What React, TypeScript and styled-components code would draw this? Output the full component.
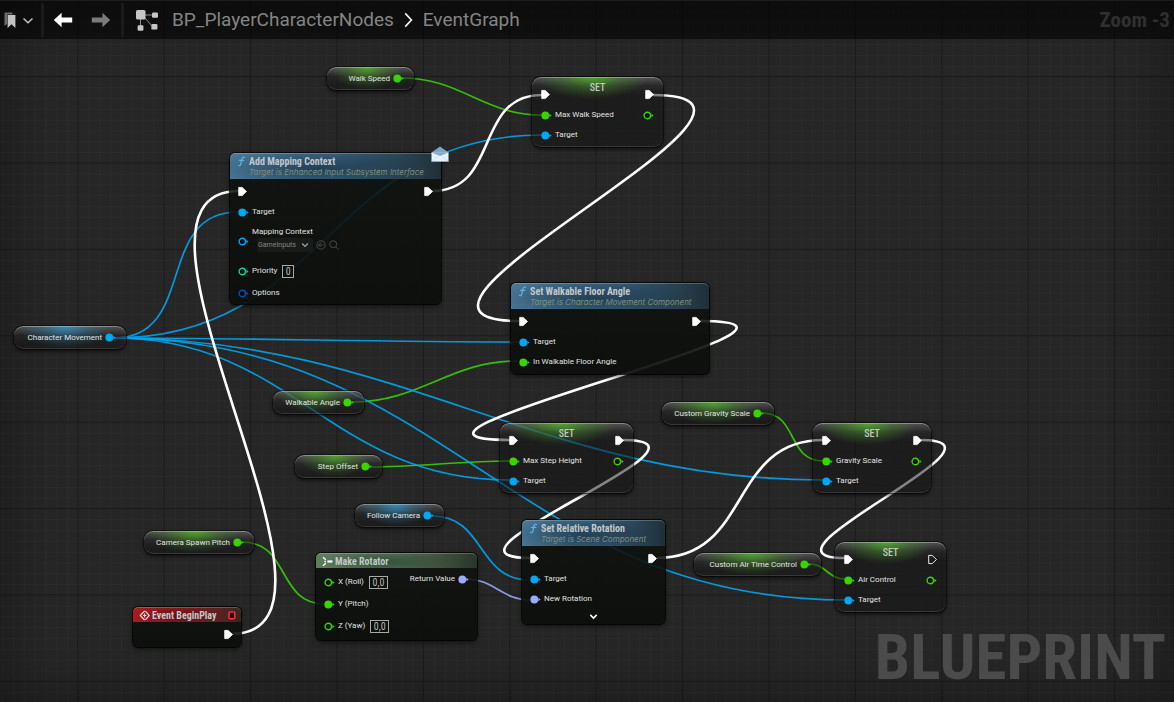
import React from "react";
import styled, { createGlobalStyle, css } from "styled-components";

const GlobalStyle = createGlobalStyle`
  *, *::before, *::after { box-sizing: border-box; }
  body { margin: 0; background: #262626; }
  button, input, select { font: inherit; color: inherit; margin: 0; }
`;

const GREEN = "#38d500";
const BLUE = "#00a8f4";
const TEAL = "#1ecb9c";
const NAVY = "#0a4fb8";
const LILAC = "#9bacff";
const WHITE = "#ffffff";

const condensed = `"Roboto Condensed", "Liberation Sans Narrow", Roboto, sans-serif`;

/* ---------- page shell ---------- */

const Editor = styled.div`
  display: grid;
  grid-template: auto 1fr / minmax(0, 1fr);
  min-height: 100vh;
  overflow: hidden;
  font-family: Roboto, "Liberation Sans", sans-serif;
  color: #e2e2e2;
`;

const Canvas = styled.main`
  grid-area: 1 / 1 / 3 / 2;
  position: relative;
  min-height: 660px;
  overflow: hidden;
  background: #262626;
`;

const Backdrop = styled.svg`
  position: absolute;
  inset: 0;
  width: 100%;
  height: 100%;
`;

const Vignette = styled.div`
  position: absolute;
  inset: 0;
  box-shadow: inset 0 0 60px rgba(0, 0, 0, 0.4);
`;

const Watermark = styled.div`
  position: absolute;
  right: 8px;
  bottom: 8px;
  font-family: ${condensed};
  font-weight: 700;
  font-size: 63px;
  line-height: 72px;
  color: #4b4b4b;
`;

const Header = styled.header`
  grid-area: 1 / 1 / 2 / 2;
  z-index: 1;
  display: flex;
  align-items: center;
  height: 39px;
  padding: 0 4px 0 2px;
  background: rgba(0, 0, 0, 0.58);
  border-top: 1px solid #1c1c1c;
`;

const ToolButton = styled.button`
  display: flex;
  align-items: center;
  justify-content: center;
  width: ${(p: { $w: number }) => p.$w}px;
  height: 34px;
  padding: 0;
  border: 0;
  background: none;
`;

const Divider = styled.span`
  width: 3px;
  height: 34px;
  background: #1b1b1b;
`;

const Crumbs = styled.nav`
  flex: 1;
  display: flex;
  align-items: center;
  gap: 10px;
  padding-left: 12px;
`;

const GraphIcon = styled.svg`
  margin-right: 4px;
`;

const Crumb = styled.a`
  font-size: 19px;
  line-height: 24px;
  color: #848484;
  text-decoration: none;
`;

const ZoomLabel = styled.span`
  font-family: ${condensed};
  font-weight: 700;
  font-size: 21px;
  line-height: 24px;
  color: #303030;
`;

/* ---------- nodes ---------- */

interface Box {
  $x: number;
  $y: number;
  $w: number;
}

const placed = css<Box>`
  position: absolute;
  left: ${(p) => p.$x}px;
  top: ${(p) => p.$y}px;
  width: ${(p) => p.$w}px;
  font-size: 8px;
  line-height: 12px;
  white-space: nowrap;
`;

const glossy = css<{ $tint: string }>`
  background:
    radial-gradient(ellipse 42% 22px at 46% 0, rgba(${(p) => p.$tint}, 0.75), rgba(${(p) => p.$tint}, 0.28) 50%, transparent),
    linear-gradient(rgba(180, 180, 180, 0.36), rgba(90, 90, 90, 0.18) 9px, transparent 18px),
    rgba(20, 20, 20, 0.52);
  box-shadow:
    inset 0 1px 0 rgba(210, 225, 210, 0.4),
    inset 0 -1px 0 rgba(255, 255, 255, 0.12),
    0 0 0 1px rgba(0, 0, 0, 0.45),
    0 2px 4px rgba(0, 0, 0, 0.7);
`;

const Pill = styled.section<Box & { $tint: string }>`
  ${placed}
  ${glossy}
  display: flex;
  align-items: center;
  justify-content: flex-end;
  gap: 3px;
  height: 23px;
  padding-right: 10px;
  border-radius: 9px;
`;

const SetNode = styled.section<Box & { $tint: string }>`
  ${placed}
  ${glossy}
  height: 70px;
  padding: 0 9px;
  border-radius: 9px;
`;

const SetTop = styled.div`
  display: flex;
  justify-content: space-between;
  align-items: flex-end;
  height: 28px;
`;

const SetTitle = styled.h2`
  align-self: flex-start;
  margin: 3px 0 0;
  font-family: ${condensed};
  font-size: 10px;
  font-weight: 500;
  line-height: 16px;
  color: #c4c8c4;
`;

const Card = styled.section<Box & { $h: number }>`
  ${placed}
  min-height: ${(p) => p.$h}px;
  border-radius: 5px;
  background: linear-gradient(rgba(15, 17, 15, 0.85), rgba(11, 14, 11, 0.93));
  box-shadow: 0 0 0 1px rgba(0, 0, 0, 0.75), 0 2px 5px rgba(0, 0, 0, 0.6);
`;

const headSkin = {
  call: "radial-gradient(ellipse 50% 80% at 42% 60%, rgba(10, 30, 45, 0.55), transparent), linear-gradient(90deg, #4a7898, #3c6683 50%, #1f2f38)",
  make: "radial-gradient(ellipse 40% 80% at 42% 60%, rgba(15, 40, 15, 0.5), transparent), linear-gradient(90deg, #5d7d5d, #56755a 50%, #2a352a)",
  event: "radial-gradient(ellipse 40% 80% at 42% 60%, rgba(50, 0, 0, 0.45), transparent), linear-gradient(90deg, #a81c1e, #8c1d1f 50%, #382424)",
};

const CardHead = styled.header<{ $kind: keyof typeof headSkin }>`
  display: grid;
  grid-template-columns: 15px 1fr auto;
  align-content: start;
  align-items: center;
  min-height: ${(p) => (p.$kind === "call" ? 26 : 15)}px;
  padding: 2px 5px 0 4px;
  border-radius: 5px 5px 0 0;
  background: ${(p) => headSkin[p.$kind]};
  box-shadow: inset 0 1px 0 rgba(255, 255, 255, 0.22);
`;

const CardTitle = styled.h2`
  margin: 0;
  font-family: ${condensed};
  font-size: 10px;
  font-weight: 700;
  line-height: 13px;
  color: #c3c8ca;
`;

const Subtitle = styled.p`
  grid-column: 2 / 4;
  margin: 0;
  font-family: Inter, Roboto, sans-serif;
  font-size: 8px;
  line-height: 9px;
  font-style: italic;
  color: #7f8e7a;
`;

const CardBody = styled.div<{ $split?: boolean }>`
  display: flex;
  flex-direction: ${(p) => (p.$split ? "row" : "column")};
  justify-content: space-between;
  padding: 3px 8px 0;
`;

const Row = styled.div<{ $h: number }>`
  display: flex;
  align-items: center;
  gap: 3px;
  height: ${(p) => p.$h}px;
`;

const Spacer = styled.span`
  flex: 1;
`;

const Field = styled.div`
  display: flex;
  flex-direction: column;
  padding-bottom: 4px;
`;

const Asset = styled.div`
  display: flex;
  align-items: center;
  gap: 3px;
  padding-left: 5px;
  color: #474a47;
`;

const SelectWrap = styled.span`
  display: flex;
  align-items: center;
  width: 56px;
  height: 14px;
  padding: 0 4px 0 1px;
  border-radius: 2px;
  background: #191b19;
`;

const Select = styled.select`
  flex: 1;
  min-width: 0;
  padding: 0;
  border: 0;
  appearance: none;
  background: none;
  font-size: 7px;
  line-height: 12px;
  color: #858785;
`;

const ValueInput = styled.input<{ $w: number }>`
  width: ${(p) => p.$w}px;
  height: 13px;
  padding: 0;
  border: 1px solid #a9aba9;
  background: #0e100e;
  font-family: ${condensed};
  font-size: 10px;
  line-height: 11px;
  text-align: center;
  color: #b5b8b5;
`;

const FieldLabel = styled.label`
  margin-right: 2px;
`;

const Expand = styled.button`
  display: flex;
  align-items: center;
  justify-content: center;
  height: 14px;
  padding: 0;
  border: 0;
  background: none;
`;

const Mail = styled.svg`
  position: absolute;
  right: -8px;
  top: -7px;
`;

/* ---------- drawings ---------- */

function Pin({ color, open }: { color: string; open?: boolean }) {
  return (
    <svg width="11" height="9" viewBox="0 0 11 9" aria-hidden="true">
      <circle
        cx="4.3"
        cy="4.5"
        r={open ? 3.2 : 3.9}
        fill={open ? "#0b0d0b" : color}
        stroke={open ? color : "none"}
        strokeWidth="1.4"
      />
      <path d="M8.4 2.7 L10.6 4.5 L8.4 6.3 Z" fill={color} />
    </svg>
  );
}

function Exec({ open }: { open?: boolean }) {
  return (
    <svg width="9" height="20" viewBox="0 0 9 20" aria-hidden="true">
      <path
        d="M0.7 5.4 H4.2 L8.5 9.5 L4.2 13.6 H0.7 Z"
        fill={open ? "none" : WHITE}
        stroke={WHITE}
        strokeWidth={open ? 0.9 : 0.8}
        strokeLinejoin="round"
      />
    </svg>
  );
}

function FunctionIcon() {
  return (
    <svg width="14" height="11" viewBox="0 0 14 11" aria-hidden="true">
      <path
        d="M10.6 1.5 C8.9 0.7 8.2 1.6 7.9 3 L6.8 8 C6.5 9.5 5.6 10 4.4 9.3 M5.4 4.4 H9.8"
        fill="none"
        stroke="#5fb2e6"
        strokeWidth="1.2"
        strokeLinecap="round"
      />
    </svg>
  );
}

function MakeIcon() {
  return (
    <svg width="14" height="11" viewBox="0 0 14 11" aria-hidden="true">
      <path d="M3 1.2 L5.8 3.8 M3 9.8 L5.8 7.2" stroke="#fff" strokeWidth="1.4" />
      <path d="M4.4 5.5 H6" stroke="#fff" strokeWidth="1.4" />
      <rect x="7.4" y="4.4" width="5" height="2.2" fill="#fff" />
    </svg>
  );
}

function EventIcon() {
  return (
    <svg width="14" height="11" viewBox="0 0 14 11" aria-hidden="true">
      <path d="M7.6 1 L3.2 5.5 L7.6 10 M8.4 1.2 L12.2 5.5 L8.4 9.8" fill="none" stroke="#f0dada" strokeWidth="1.2" />
      <path d="M6.2 5.5 H9.4 M7.6 3.6 V7.4" stroke="#f0dada" strokeWidth="1.1" />
    </svg>
  );
}

function DelegateIcon() {
  return (
    <svg width="8" height="9" viewBox="0 0 8 9" aria-hidden="true">
      <rect x="1" y="0.9" width="5.8" height="6.8" rx="1" fill="#300" stroke="#ff3636" strokeWidth="1.4" />
    </svg>
  );
}

function Chevron({ size, color }: { size: number; color: string }) {
  return (
    <svg width={size} height={size} viewBox="0 0 10 10" aria-hidden="true">
      <path d="M1.4 3.2 L5 6.8 L8.6 3.2" fill="none" stroke={color} strokeWidth="1.6" />
    </svg>
  );
}

/* ---------- wires ---------- */

type Link = [number, number, number, number, string];

const links: Link[] = [
  [402, 78, 542, 115, GREEN],
  [352, 402, 518, 361, GREEN],
  [370, 467, 509, 461, GREEN],
  [242, 542, 325, 604, GREEN],
  [762, 413, 823, 461, GREEN],
  [809, 564, 845, 579, GREEN],
  [114, 338, 238, 212, BLUE],
  [114, 338, 542, 135, BLUE],
  [114, 338, 518, 342, BLUE],
  [114, 338, 509, 480, BLUE],
  [114, 338, 823, 480, BLUE],
  [114, 338, 845, 600, BLUE],
  [432, 516, 530, 580, BLUE],
  [466, 579, 530, 600, LILAC],
  [231, 634, 239, 191, WHITE],
  [432, 191, 542, 95, WHITE],
  [653, 95, 519, 321, WHITE],
  [700, 321, 510, 440, WHITE],
  [623, 440, 530, 558, WHITE],
  [657, 558, 823, 440, WHITE],
  [921, 440, 845, 558, WHITE],
];

/* Horizontal handles grow with distance; wires that run back to the left swing wider. */
function wirePath([x1, y1, x2, y2]: Link) {
  const dx = Math.abs(x2 - x1);
  const dy = Math.abs(y2 - y1);
  const reach = x2 >= x1 ? (dx + dy) / 3 : (2 * Math.min(dx, 200) + 1.5 * Math.min(dy, 200)) / 3.1;
  return `M${x1} ${y1} C${x1 + reach} ${y1} ${x2 - reach} ${y2} ${x2} ${y2}`;
}

function Wires() {
  return (
    <Backdrop aria-hidden="true">
      <defs>
        <pattern id="minor" width="10.8" height="10.8" x="-8.6" y="-9.9" patternUnits="userSpaceOnUse">
          <path d="M0 0.5 H10.8 M0.5 0 V10.8" stroke="#2b2b2b" strokeWidth="1" />
        </pattern>
        <pattern id="major" width="86.4" height="86.4" x="-9.1" y="-10.4" patternUnits="userSpaceOnUse">
          <path d="M0 0.6 H86.4 M0.6 0 V86.4" stroke="#1b1b1b" strokeWidth="1.2" />
        </pattern>
      </defs>
      <rect width="100%" height="100%" fill="url(#minor)" />
      <rect width="100%" height="100%" fill="url(#major)" />
      {links.map((l, i) => (
        <path
          key={i}
          d={wirePath(l)}
          fill="none"
          stroke={l[4]}
          strokeOpacity={l[4] === WHITE ? 1 : 0.88}
          strokeWidth={l[4] === WHITE ? 2.6 : 1.7}
        />
      ))}
    </Backdrop>
  );
}

/* ---------- node kinds ---------- */

const tints: Record<string, string> = {
  [GREEN]: "84, 190, 40",
  [BLUE]: "50, 160, 220",
};

function Getter({ x, y, w, name, color }: { x: number; y: number; w: number; name: string; color: string }) {
  return (
    <Pill $x={x} $y={y} $w={w} $tint={tints[color]}>
      <span>{name}</span>
      <Pin color={color} />
    </Pill>
  );
}

function Setter({ x, y, w, name, last }: { x: number; y: number; w: number; name: string; last?: boolean }) {
  return (
    <SetNode $x={x} $y={y} $w={w} $tint={tints[GREEN]}>
      <SetTop>
        <Exec />
        <SetTitle>SET</SetTitle>
        <Exec open={last} />
      </SetTop>
      <Row $h={20}>
        <Pin color={GREEN} />
        <span>{name}</span>
        <Spacer />
        <Pin color={GREEN} open />
      </Row>
      <Row $h={20}>
        <Pin color={BLUE} />
        <span>Target</span>
      </Row>
    </SetNode>
  );
}

function CallHead({ title, sub }: { title: string; sub: string }) {
  return (
    <CardHead $kind="call">
      <FunctionIcon />
      <CardTitle>{title}</CardTitle>
      <Subtitle>{sub}</Subtitle>
    </CardHead>
  );
}

function ExecRow() {
  return (
    <Row $h={20}>
      <Exec />
      <Spacer />
      <Exec />
    </Row>
  );
}

function AxisRow({ id, name, linked }: { id: string; name: string; linked?: boolean }) {
  return (
    <Row $h={22}>
      <Pin color={GREEN} open={!linked} />
      {linked ? <span>{name}</span> : <FieldLabel htmlFor={id}>{name}</FieldLabel>}
      {!linked && <ValueInput id={id} $w={19} defaultValue="0,0" />}
    </Row>
  );
}

export default function App() {
  return (
    <>
      <GlobalStyle />
      <Editor>
        <Canvas>
          <Wires />
          <Vignette />
          <Watermark>BLUEPRINT</Watermark>

          <Getter x={327} y={67} w={87} name="Walk Speed" color={GREEN} />
          <Getter x={14} y={326} w={112} name="Character Movement" color={BLUE} />
          <Getter x={273} y={391} w={91} name="Walkable Angle" color={GREEN} />
          <Getter x={295} y={455} w={87} name="Step Offset" color={GREEN} />
          <Getter x={355} y={504} w={89} name="Follow Camera" color={BLUE} />
          <Getter x={144} y={531} w={110} name="Camera Spawn Pitch" color={GREEN} />
          <Getter x={662} y={402} w={112} name="Custom Gravity Scale" color={GREEN} />
          <Getter x={694} y={553} w={127} name="Custom Air Time Control" color={GREEN} />

          <Setter x={532} y={77} w={131} name="Max Walk Speed" />
          <Setter x={500} y={423} w={133} name="Max Step Height" />
          <Setter x={813} y={423} w={118} name="Gravity Scale" />
          <Setter x={835} y={542} w={111} name="Air Control" last />

          <Card $x={230} $y={153} $w={211} $h={151}>
            <CallHead title="Add Mapping Context" sub="Target is Enhanced Input Subsystem Interface" />
            <Mail width="18" height="16" viewBox="0 0 18 16" aria-hidden="true">
              <path d="M0.5 6.6 L9 0.6 L17.5 6.6 L17.5 8 H0.5 Z" fill="#7fa6c2" />
              <rect x="0.5" y="6.6" width="17" height="9" fill="#e4f3fd" />
              <path d="M0.5 6.6 L9 10 L17.5 6.6 Z" fill="#86a9c2" />
              <path d="M0.5 15.4 L7 10.2 M17.5 15.4 L11 10.2" stroke="#c4dbea" strokeWidth="0.7" />
            </Mail>
            <CardBody>
              <ExecRow />
              <Row $h={20}>
                <Pin color={BLUE} />
                <span>Target</span>
              </Row>
              <Row $h={38}>
                <Pin color={BLUE} open />
                <Field>
                  <label htmlFor="mapping">Mapping Context</label>
                  <Asset>
                    <SelectWrap>
                      <Select id="mapping" defaultValue="GameInputs">
                        <option>GameInputs</option>
                      </Select>
                      <Chevron size={8} color="#a2a4a2" />
                    </SelectWrap>
                    <svg width="10" height="10" viewBox="0 0 10 10" aria-hidden="true">
                      <circle cx="5" cy="5" r="4.2" fill="none" stroke="currentColor" />
                      <path d="M7.6 5 H2.8 M4.6 3 L2.6 5 L4.6 7" fill="none" stroke="currentColor" />
                    </svg>
                    <svg width="10" height="10" viewBox="0 0 10 10" aria-hidden="true">
                      <circle cx="4.2" cy="4.2" r="3.5" fill="none" stroke="currentColor" />
                      <path d="M6.8 6.8 L9.6 9.6" stroke="currentColor" />
                    </svg>
                  </Asset>
                </Field>
              </Row>
              <Row $h={22}>
                <Pin color={TEAL} open />
                <FieldLabel htmlFor="priority">Priority</FieldLabel>
                <ValueInput id="priority" $w={12} defaultValue="0" />
              </Row>
              <Row $h={22}>
                <Pin color={NAVY} open />
                <span>Options</span>
              </Row>
            </CardBody>
          </Card>

          <Card $x={511} $y={283} $w={198} $h={91}>
            <CallHead title="Set Walkable Floor Angle" sub="Target is Character Movement Component" />
            <CardBody>
              <ExecRow />
              <Row $h={20}>
                <Pin color={BLUE} />
                <span>Target</span>
              </Row>
              <Row $h={20}>
                <Pin color={GREEN} />
                <span>In Walkable Floor Angle</span>
              </Row>
            </CardBody>
          </Card>

          <Card $x={522} $y={520} $w={143} $h={104}>
            <CallHead title="Set Relative Rotation" sub="Target is Scene Component" />
            <CardBody>
              <ExecRow />
              <Row $h={20}>
                <Pin color={BLUE} />
                <span>Target</span>
              </Row>
              <Row $h={20}>
                <Pin color={LILAC} />
                <span>New Rotation</span>
              </Row>
              <Expand aria-label="Show advanced pins">
                <Chevron size={9} color="#ffffff" />
              </Expand>
            </CardBody>
          </Card>

          <Card $x={316} $y={553} $w={161} $h={87}>
            <CardHead $kind="make">
              <MakeIcon />
              <CardTitle>Make Rotator</CardTitle>
            </CardHead>
            <CardBody $split>
              <div>
                <AxisRow id="roll" name="X (Roll)" />
                <AxisRow id="pitch" name="Y (Pitch)" linked />
                <AxisRow id="yaw" name="Z (Yaw)" />
              </div>
              <Row $h={16}>
                <span>Return Value</span>
                <Pin color={LILAC} />
              </Row>
            </CardBody>
          </Card>

          <Card $x={133} $y={607} $w={108} $h={40}>
            <CardHead $kind="event">
              <EventIcon />
              <CardTitle>Event BeginPlay</CardTitle>
              <DelegateIcon />
            </CardHead>
            <CardBody>
              <Row $h={20}>
                <Spacer />
                <Exec />
              </Row>
            </CardBody>
          </Card>
        </Canvas>

        <Header>
          <ToolButton $w={39} aria-label="Bookmarks">
            <svg width="35" height="18" viewBox="0 0 35 18" aria-hidden="true">
              <path d="M0.5 1.5 H8.5 V3.5 H3 V13 L0.5 15 Z" fill="#6d6d6d" />
              <path d="M3.6 4 H11.4 V17 L7.5 13.2 L3.6 17 Z" fill="#c2c2c2" />
              <path d="M19.5 7.5 L24 11.8 L28.5 7.5" fill="none" stroke="#c2c2c2" strokeWidth="1.5" />
            </svg>
          </ToolButton>
          <Divider />
          <ToolButton $w={37} aria-label="Back">
            <svg width="20" height="16" viewBox="0 0 20 16" aria-hidden="true">
              <path d="M0.8 8 L8.6 0.8 V5.6 H19.2 V10.4 H8.6 V15.2 Z" fill="#ffffff" />
            </svg>
          </ToolButton>
          <ToolButton $w={40} aria-label="Forward">
            <svg width="20" height="16" viewBox="0 0 20 16" aria-hidden="true">
              <path d="M19.2 8 L11.4 0.8 V5.6 H0.8 V10.4 H11.4 V15.2 Z" fill="#7b7b7b" />
            </svg>
          </ToolButton>
          <Divider />
          <Crumbs aria-label="Graph path">
            <GraphIcon width="22" height="21" viewBox="0 0 22 21" aria-hidden="true">
              <path d="M8 5 H18 M8 7 L17 17 M4.5 8 V17" stroke="#8f8f8f" strokeWidth="1" />
              <rect x="0" y="0" width="9.5" height="9.5" rx="1.6" fill="#c6c6c6" />
              <rect x="16" y="2.5" width="6" height="5.2" rx="1.2" fill="#c6c6c6" />
              <rect x="15.4" y="14" width="6" height="5.6" rx="1.2" fill="#c6c6c6" />
              <rect x="1.6" y="15.2" width="5.8" height="5.6" rx="1.2" fill="#c6c6c6" />
            </GraphIcon>
            <Crumb href="#nodes">BP_PlayerCharacterNodes</Crumb>
            <svg width="9" height="16" viewBox="0 0 9 16" aria-hidden="true">
              <path d="M1.2 1.4 L7.4 8 L1.2 14.6" fill="none" stroke="#f2f2f2" strokeWidth="1.7" />
            </svg>
            <Crumb href="#event-graph">EventGraph</Crumb>
          </Crumbs>
          <ZoomLabel>Zoom -3</ZoomLabel>
        </Header>
      </Editor>
    </>
  );
}
